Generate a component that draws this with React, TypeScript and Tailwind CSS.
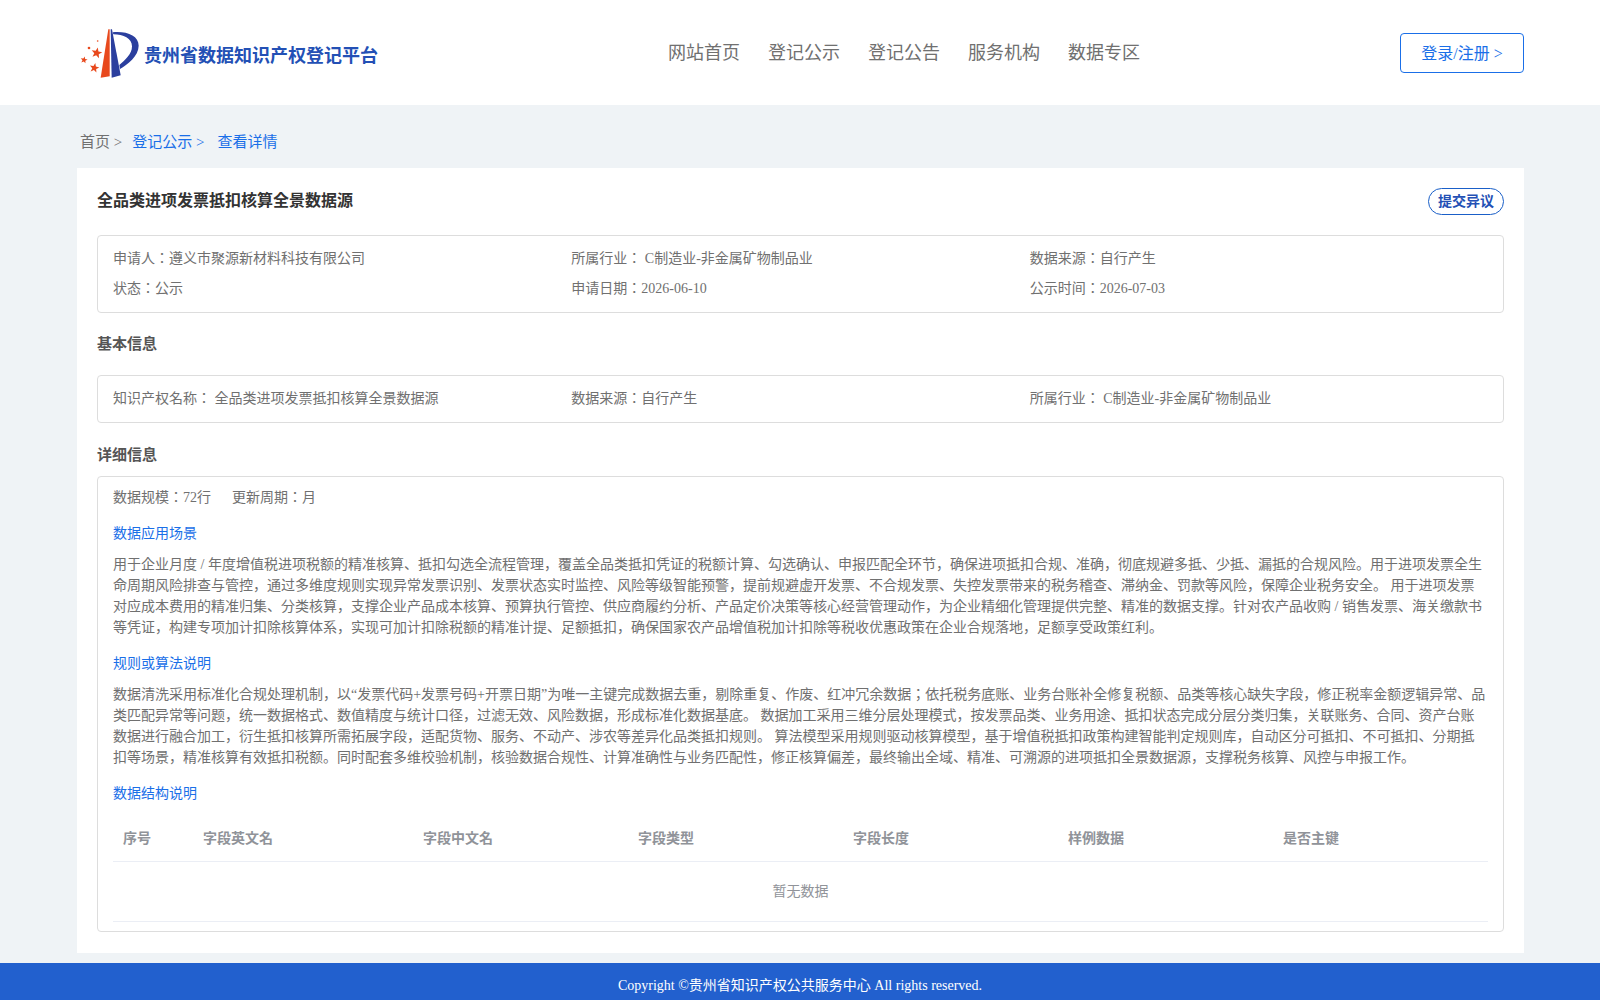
import React from 'react';

const font = "font-['Liberation_Serif','Noto_Sans_CJK_JP',serif]";

const navItems = ['网站首页', '登记公示', '登记公告', '服务机构', '数据专区'];
const columns = ['序号', '字段英文名', '字段中文名', '字段类型', '字段长度', '样例数据', '是否主键'];

const Star = ({ cx, cy, r }: { cx: number; cy: number; r: number }) => {
  const points = Array.from({ length: 10 }, (_, i) => {
    const a = -Math.PI / 2 + 0.2 + (i * Math.PI) / 5;
    const d = i % 2 === 0 ? r : r * 0.42;
    return `${cx + d * Math.cos(a)},${cy + d * Math.sin(a)}`;
  }).join(' ');
  return <polygon points={points} fill="#e8491d" />;
};

const Logo = () => (
  <svg width="60" height="54" viewBox="30 20 180 162" className="mt-[2px] shrink-0">
    <path d="M115 27 L119 27 L119 168 L92 172 Z" fill="#e8491d" />
    <path d="M122 27 L126 27 L152 165 L125 172 Z" fill="#2b3f9e" />
    <path d="M128 36 C170 32 206 46 206 76 C206 108 172 132 150 146 L148 134 C166 118 186 102 186 78 C186 54 160 42 130 42 Z" fill="#2b3f9e" />
    <Star cx={80} cy={98} r={17} />
    <Star cx={42} cy={119} r={11} />
    <Star cx={73} cy={143} r={15} />
    <circle cx="57" cy="83" r="4" fill="#e8491d" />
    <circle cx="83" cy="62" r="2.5" fill="#e8491d" />
  </svg>
);

const Field = ({ children }: { children: React.ReactNode }) => <div className="leading-[30px]">{children}</div>;

export default function App() {
  return (
    <div className={`${font} min-h-[1000px] bg-[#eff3f6] text-[14px] text-[#707070]`}>
      <header className="flex h-[105px] items-center justify-between bg-white pl-[80px] pr-[76px]">
        <div className="flex w-[328px] items-center">
          <Logo />
          <span className="mt-[7px] ml-[4px] text-[18px] font-bold text-[#2350b5]">贵州省数据知识产权登记平台</span>
        </div>
        <nav className="mt-[2px] flex gap-[28px] text-[18px] text-[#707070]">
          {navItems.map(item => (
            <span key={item}>{item}</span>
          ))}
        </nav>
        <button
          type="button"
          className="h-[40px] w-[124px] rounded-[4px] border border-[#1a6fe8] pt-[2px] text-[16px] text-[#1a6fe8]"
        >
          登录/注册 &gt;
        </button>
      </header>

      <div className="flex h-[63px] items-center pt-[12px] pl-[80px] text-[15px]">
        <span>首页 &gt;</span>
        <span className="ml-[10px] text-[#1a6fe8]">登记公示 &gt;</span>
        <span className="ml-[13px] text-[#1a6fe8]">查看详情</span>
      </div>

      <main className="mr-[76px] ml-[77px] h-[785px] bg-white px-[20px] pt-[20px]">
        <div className="flex h-[47px] items-start justify-between">
          <h1 className="pt-[1px] text-[16px] leading-[24px] font-bold text-[#333]">全品类进项发票抵扣核算全景数据源</h1>
          <button
            type="button"
            className="h-[27px] w-[76px] rounded-[14px] border border-[#1a5fc8] text-[14px] font-bold text-[#2350b5]"
          >
            提交异议
          </button>
        </div>

        <div className="grid grid-cols-3 rounded-[4px] border border-[#ddd] px-[15px] py-[8px]">
          <Field>申请人：遵义市聚源新材料科技有限公司</Field>
          <Field>所属行业： C制造业-非金属矿物制品业</Field>
          <Field>数据来源：自行产生</Field>
          <Field>状态：公示</Field>
          <Field>申请日期：2026-06-10</Field>
          <Field>公示时间：2026-07-03</Field>
        </div>

        <h2 className="mt-[21px] mb-[21px] text-[15px] leading-[20px] font-bold text-[#555]">基本信息</h2>

        <div className="grid grid-cols-3 rounded-[4px] border border-[#ddd] px-[15px] py-[8px]">
          <Field>知识产权名称： 全品类进项发票抵扣核算全景数据源</Field>
          <Field>数据来源：自行产生</Field>
          <Field>所属行业： C制造业-非金属矿物制品业</Field>
        </div>

        <h2 className="mt-[22px] mb-[11px] text-[15px] leading-[20px] font-bold text-[#555]">详细信息</h2>

        <div className="h-[456px] rounded-[4px] border border-[#ddd] px-[15px]">
          <div className="flex gap-[21px] pt-[6px] leading-[30px]">
            <span>数据规模：72行</span>
            <span>更新周期：月</span>
          </div>
          <div className="mt-[6px] leading-[30px] text-[#1a6fe8]">数据应用场景</div>
          <p className="mt-[5px] leading-[21px]">
            用于企业月度 / 年度增值税进项税额的精准核算、抵扣勾选全流程管理，覆盖全品类抵扣凭证的税额计算、勾选确认、申报匹配全环节，确保进项抵扣合规、准确，彻底规避多抵、少抵、漏抵的合规风险。用于进项发票全生命周期风险排查与管控，通过多维度规则实现异常发票识别、发票状态实时监控、风险等级智能预警，提前规避虚开发票、不合规发票、失控发票带来的税务稽查、滞纳金、罚款等风险，保障企业税务安全。 用于进项发票对应成本费用的精准归集、分类核算，支撑企业产品成本核算、预算执行管控、供应商履约分析、产品定价决策等核心经营管理动作，为企业精细化管理提供完整、精准的数据支撑。针对农产品收购 / 销售发票、海关缴款书等凭证，构建专项加计扣除核算体系，实现可加计扣除税额的精准计提、足额抵扣，确保国家农产品增值税加计扣除等税收优惠政策在企业合规落地，足额享受政策红利。
          </p>
          <div className="mt-[11px] leading-[30px] text-[#1a6fe8]">规则或算法说明</div>
          <p className="mt-[5px] leading-[21px]">
            数据清洗采用标准化合规处理机制，以“发票代码+发票号码+开票日期”为唯一主键完成数据去重，剔除重复、作废、红冲冗余数据；依托税务底账、业务台账补全修复税额、品类等核心缺失字段，修正税率金额逻辑异常、品类匹配异常等问题，统一数据格式、数值精度与统计口径，过滤无效、风险数据，形成标准化数据基底。 数据加工采用三维分层处理模式，按发票品类、业务用途、抵扣状态完成分层分类归集，关联账务、合同、资产台账数据进行融合加工，衍生抵扣核算所需拓展字段，适配货物、服务、不动产、涉农等差异化品类抵扣规则。 算法模型采用规则驱动核算模型，基于增值税抵扣政策构建智能判定规则库，自动区分可抵扣、不可抵扣、分期抵扣等场景，精准核算有效抵扣税额。同时配套多维校验机制，核验数据合规性、计算准确性与业务匹配性，修正核算偏差，最终输出全域、精准、可溯源的进项抵扣全景数据源，支撑税务核算、风控与申报工作。
          </p>
          <div className="mt-[11px] leading-[30px] text-[#1a6fe8]">数据结构说明</div>
          <table className="mt-[7px] w-full table-fixed border-collapse">
            <thead>
              <tr className="h-[45px] border-b border-[#ebeef5] text-left font-bold text-[#909399]">
                {columns.map((col, i) => (
                  <th key={col} className={`px-[10px] ${i === 0 ? 'w-[80px]' : i === 1 ? 'w-[220px]' : 'w-[215px]'}`}>
                    {col}
                  </th>
                ))}
              </tr>
            </thead>
            <tbody>
              <tr className="h-[60px] border-b border-[#ebeef5]">
                <td colSpan={7} className="text-center text-[#909399]">
                  暂无数据
                </td>
              </tr>
            </tbody>
          </table>
        </div>
      </main>

      <footer className="mt-[10px] flex h-[37px] items-center justify-center bg-[#2260ce] pt-[7px] text-[14px] text-white">
        Copyright ©贵州省知识产权公共服务中心 All rights reserved.
      </footer>
    </div>
  );
}
